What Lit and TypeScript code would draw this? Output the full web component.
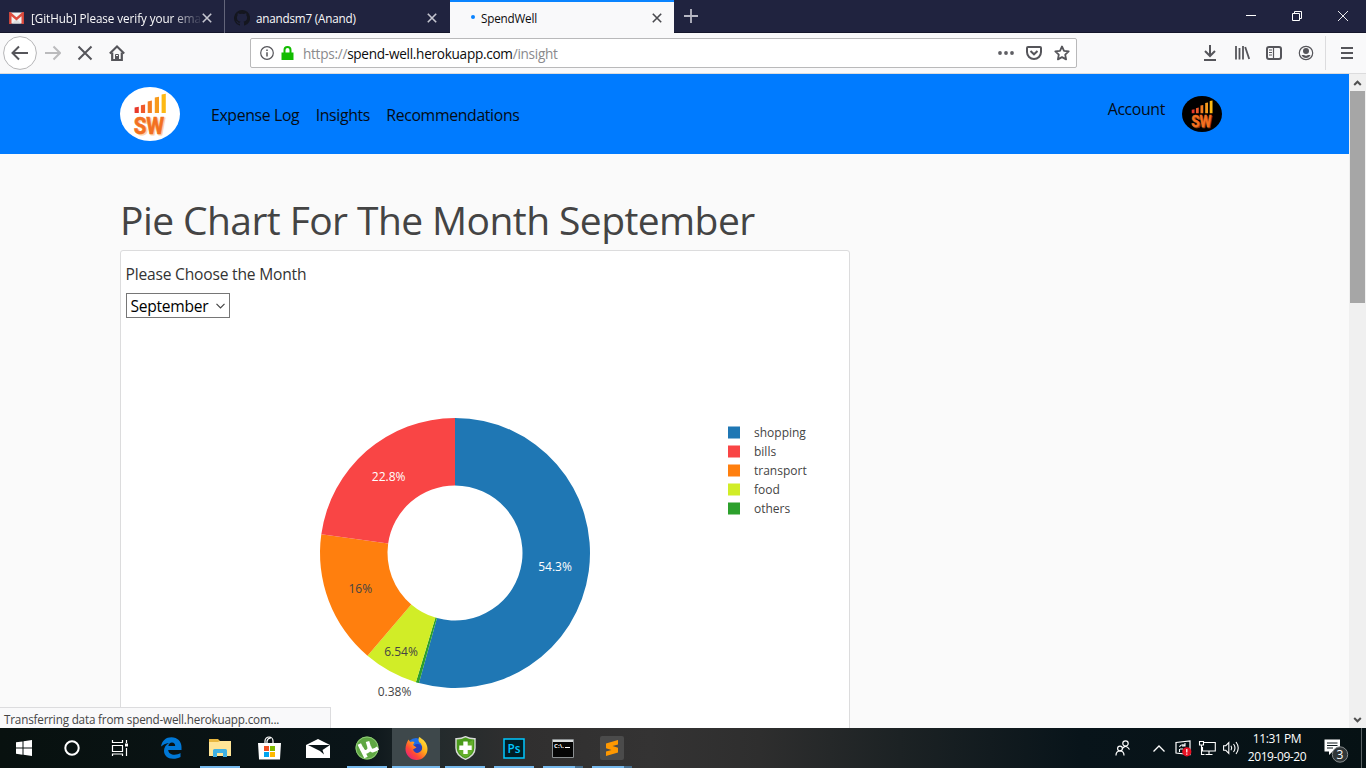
import { LitElement, html, svg, css } from "lit";
import { customElement, property } from "lit/decorators.js";

const slices = [
  { label: "shopping", value: 54.3, text: "54.3%", color: "#1f77b4", ink: "#fff", x: 555, y: 571 },
  { label: "others", value: 0.38, text: "0.38%", color: "#2ca02c", ink: "#444", x: 394.5, y: 696 },
  { label: "food", value: 6.54, text: "6.54%", color: "#d1ed27", ink: "#444", x: 401, y: 656 },
  { label: "transport", value: 16, text: "16%", color: "#ff7f0e", ink: "#444", x: 360.3, y: 593 },
  { label: "bills", value: 22.78, text: "22.8%", color: "#f94545", ink: "#fff", x: 388.7, y: 481 },
];
const legendOrder = ["shopping", "bills", "transport", "food", "others"];

@customElement("sw-logo")
class SwLogo extends LitElement {
  @property({ type: Boolean }) dark = false;
  static styles = css`
    :host { display: block; }
    svg { display: block; width: 100%; height: 100%; }
    text { font: bold 24px "Roboto", "Liberation Sans", sans-serif; }
  `;
  render() {
    const bars = [
      { x: 14.6, y: 20, c: "#e8392a" },
      { x: 20.9, y: 17.6, c: "#f0592a" },
      { x: 27.7, y: 13.8, c: "#f47d20" },
      { x: 34.8, y: 10, c: "#f79a1b" },
      { x: 41.6, y: 7, c: "#fdb913" },
    ];
    return html`<svg viewBox="0 0 60 54">
      <ellipse cx="30" cy="27" rx="30" ry="27" fill=${this.dark ? "#000" : "#fff"} />
      ${bars.map((b) => svg`<path d=${`M${b.x} ${b.y + 0.6}l4.2 -.8V${26}h-4.2z`} fill=${b.c} />`)}
      <text x="15.2" y="48.3" textLength="30" lengthAdjust="spacingAndGlyphs" fill=${this.dark ? "#8a3d10" : "#fbd7ad"} stroke=${this.dark ? "#8a3d10" : "#fbd7ad"}>SW</text>
      <text x="13.8" y="47" textLength="30" lengthAdjust="spacingAndGlyphs" fill="#f37021" stroke="#f37021" stroke-width=".6">SW</text>
    </svg>`;
  }
}

@customElement("browser-tabs")
class BrowserTabs extends LitElement {
  static styles = css`
    :host { display: flex; height: 33px; box-sizing: border-box; background: #20233f; border-bottom: 1px solid #14162b; }
    .tab { display: flex; align-items: center; width: 225px; height: 33px; box-sizing: border-box; color: #f9f9fa; padding: 2px 12px 0 9px; border-right: 1px solid #63657a; }
    .tab.second { border-right: 0; padding-right: 13px; }
    .tab.active { background: #f9f9fa; color: #0c0c0d; border-top: 2px solid #0a84ff; border-right: 0; width: 224px; padding: 0 12px 0 20px; }
    .name { flex: 1; margin-left: 6px; font-size: 11.7px; letter-spacing: -.2px; white-space: nowrap; line-height: 18px; }
    .fade { margin-left: 7px; -webkit-mask-image: linear-gradient(90deg, #000 140px, transparent 172px); mask-image: linear-gradient(90deg, #000 140px, transparent 172px); letter-spacing: -.07px; }
    .dot { width: 4px; height: 4px; border-radius: 2px; background: #0a84ff; margin-left: 1px; margin-top: -1px; }
    svg { display: block; flex: none; }
    .plus { margin: 9px 0 0 10px; }
    .controls { margin-left: auto; display: flex; }
    .controls svg { width: 46px; height: 32px; }
  `;
  cross(color: string) {
    return html`<svg width="10" height="10" viewBox="0 0 10 10"><path d="M.8.8l8.4 8.4M9.2.8L.8 9.2" stroke=${color} stroke-width="1.6" /></svg>`;
  }
  render() {
    return html`
      <div class="tab">
        <svg width="15" height="12" viewBox="0 0 15 12"><path d="M1 .5h13v11H1z" fill="#f2f2f2" /><path d="M3 11.5L7.5 7l4.5 4.5" fill="#ddd" /><path d="M1.3 12V1.5L7.5 7l6.2-5.5V12" fill="none" stroke="#dd4b3e" stroke-width="2.4" /></svg>
        <span class="name fade">[GitHub] Please verify your ema</span>${this.cross("#c5c6d0")}
      </div>
      <div class="tab second">
        <svg width="16" height="16" viewBox="0 0 16 16"><path fill="#14161f" d="M8 0a8 8 0 0 0-2.5 15.6c.4.1.5-.2.5-.4v-1.5c-2.2.5-2.700-.9-2.700-.9-.4-.9-.9-1.200-.9-1.200-.7-.5.1-.5.1-.5.8.1 1.200.8 1.200.8.7 1.300 1.900.9 2.300.7.1-.5.3-.9.5-1.100-1.800-.2-3.600-.9-3.600-4 0-.9.300-1.600.800-2.200-.1-.2-.4-1 .1-2.100 0 0 .7-.2 2.200.8a7.600 7.600 0 0 1 4 0c1.500-1 2.200-.8 2.200-.8.400 1.100.2 1.900.1 2.100.5.600.8 1.300.8 2.200 0 3.100-1.900 3.800-3.700 4 .300.2.6.7.6 1.500v2.200c0 .2.1.5.6.4A8 8 0 0 0 8 0z" /></svg>
        <span class="name">anandsm7 (Anand)</span>${this.cross("#c5c6d0")}
      </div>
      <div class="tab active"><span class="dot"></span><span class="name">SpendWell</span>${this.cross("#4a4a4f")}</div>
      <svg class="plus" width="14" height="14" viewBox="0 0 14 14"><path d="M7 0v14M0 7h14" stroke="#b7b8c4" stroke-width="1.8" /></svg>
      <div class="controls">
        <svg viewBox="0 0 46 32"><path d="M18 15.500h10" stroke="#fff" /></svg>
        <svg viewBox="0 0 46 32"><path d="M18.500 13.500h7v7h-7zM20.500 13.500v-2h7v7h-2" fill="none" stroke="#fff" /></svg>
        <svg viewBox="0 0 46 32"><path d="M18 11l10 10M28 11L18 21" stroke="#fff" stroke-width=".9" /></svg>
      </div>`;
  }
}

@customElement("browser-toolbar")
class BrowserToolbar extends LitElement {
  static styles = css`
    :host { display: flex; align-items: center; height: 41px; box-sizing: border-box; background: #f9f9fa; border-bottom: 1px solid #dcdcdd; }
    svg { display: block; flex: none; fill: none; stroke: #55555a; stroke-width: 2; }
    .nav { display: flex; align-items: center; margin-left: 3px; width: 247px; }
    .forward { stroke: #bbbbbd; margin-left: 8px; }
    .stop { margin-left: 16px; }
    .home { margin-left: 16px; }
    .url { display: flex; align-items: center; width: 827px; height: 30px; box-sizing: border-box; border: 1px solid #b9b9ba; border-radius: 2px; background: #fff; padding: 0 6px 0 9px; }
    .lock { margin-left: 7px; }
    .address { flex: 1; margin-left: 9px; font-size: 13.6px; letter-spacing: -.28px; color: #8a8a8d; line-height: 20px; padding-top: 2px; white-space: nowrap; }
    .address b { font-weight: 400; color: #0c0c0d; }
    .page-actions { display: flex; align-items: center; gap: 12px; }
    .tools { margin-left: auto; display: flex; align-items: center; gap: 16px; margin-right: 13px; }
    .sep { width: 1px; height: 34px; background: #dcdcde; margin: 0 -2px 0 -5px; }
  `;
  render() {
    return html`
      <div class="nav">
        <svg width="34" height="34" viewBox="0 0 34 34"><circle cx="17" cy="17" r="16.400" fill="#fff" stroke="#b5b5b7" stroke-width="1" /><path d="M10 17h15M16 10.500L9.500 17l6.500 6.500" /></svg>
        <svg class="forward" width="16" height="16" viewBox="0 0 16 16"><path d="M0 8h15M8.500 1.500L15 8l-6.500 6.500" /></svg>
        <svg class="stop" width="16" height="16" viewBox="0 0 16 16"><path d="M1.500 1.500l13 13M14.500 1.500l-13 13" /></svg>
        <svg class="home" width="16" height="16" viewBox="0 0 16 16"><path d="M.8 8.500L8 1.500l7.200 7" /><path d="M3.200 7.500V15h9.600V7.500M8 15v-4" stroke-width="2.200" /><path d="M6.500 9.500h3V15h-3z" stroke-width="1" /></svg>
      </div>
      <div class="url">
        <svg width="14" height="14" viewBox="0 0 14 14"><circle cx="7" cy="7" r="6.300" stroke-width="1.200" /><path d="M7 6.300v4.200M7 3.500v1.500" stroke-width="1.500" /></svg>
        <svg class="lock" width="13" height="14" viewBox="0 0 13 14"><path d="M.5 6.500h12v7.500H.5z" fill="#12bc00" stroke="none" /><path d="M3.500 7V4a3 3 0 0 1 6 0v3" stroke="#12bc00" /></svg>
        <span class="address">https://<b>spend-well.herokuapp.com</b>/insight</span>
        <div class="page-actions">
          <svg width="16" height="4" viewBox="0 0 16 4"><g fill="#5f5f64" stroke="none"><circle cx="2" cy="2" r="1.900" /><circle cx="8" cy="2" r="1.900" /><circle cx="14" cy="2" r="1.900" /></g></svg>
          <svg width="16" height="14" viewBox="0 0 16 14"><path d="M2 1h12a1 1 0 0 1 1 1v4a7 7 0 0 1-14 0V2a1 1 0 0 1 1-1z" /><path d="M4.500 5L8 8.300 11.500 5" /></svg>
          <svg width="16" height="16" viewBox="0 0 16 16"><path d="M8 1.500l2 4.300 4.700.6-3.500 3.200.9 4.800L8 12.100l-4.100 2.300.9-4.800L1.300 6.400l4.700-.6z" stroke-width="1.800" stroke-linejoin="round" /></svg>
        </div>
      </div>
      <div class="tools">
        <svg width="16" height="16" viewBox="0 0 16 16"><path d="M8 0v11M3 6l5 5 5-5M2 15h12" /></svg>
        <svg width="16" height="16" viewBox="0 0 16 16"><path d="M2 1v13.500M5.500 3v11.500M9 1v13.500M11.200 2l4 12" stroke-width="1.800" /></svg>
        <svg width="16" height="14" viewBox="0 0 16 14"><rect x="1" y="1" width="14" height="12" rx="2" /><path d="M7.500 1v12" stroke-width="1.200" /><path d="M3 4h3M3 6.500h3M3 9h3" stroke-width="1" /></svg>
        <svg width="16" height="16" viewBox="0 0 16 16"><circle cx="8" cy="8" r="6.700" stroke-width="1.200" /><circle cx="8" cy="6" r="3" fill="#55555a" stroke="none" /><path d="M3.500 10h2.500q2 1.300 4 0h2.500q-1.300 3-4.500 3t-4.500-3z" fill="#55555a" stroke="none" /></svg>
        <span class="sep"></span>
        <svg width="13" height="14" viewBox="0 0 13 14"><path d="M1 2h12M1 7h12M1 12h12" /></svg>
      </div>`;
  }
}

@customElement("spend-page")
class SpendPage extends LitElement {
  static styles = css`
    :host { display: flex; flex-direction: column; flex: 1; min-width: 0; overflow: hidden; background: #fafafa; }
    .navbar { flex: none; display: flex; align-items: center; height: 80px; background: #007bff; padding: 0 127px 0 120px; color: #050b14; font-size: 15.800px; letter-spacing: -.34px; }
    .brand { width: 60px; height: 54px; margin-top: -1px; }
    .links { display: flex; gap: 16.300px; margin-left: 31px; padding-top: 2px; }
    .links span, .account { white-space: nowrap; line-height: 24px; }
    .account { margin: -10px 17px 0 auto; }
    .avatar { width: 40px; height: 36px; margin-top: 0; }
    .main { flex: none; margin-left: 120px; width: 730px; }
    h1 { margin: 42px 0 6px; font-size: 39px; letter-spacing: -.58px; line-height: 48px; font-weight: 400; color: #444; white-space: nowrap; }
    .card { height: 520px; box-sizing: border-box; border: 1px solid #dcdcdd; border-radius: 3px; background: #fff; padding: 11px 0 0; }
    .label { margin-left: 4.500px; font-size: 15.600px; letter-spacing: -.2px; line-height: 24px; color: #333; }
    .select { margin: 7px 0 0 5px; width: 104px; height: 25px; box-sizing: border-box; border: 1px solid #767676; display: flex; align-items: center; justify-content: space-between; padding: 0 4px 0 3.500px; font-size: 15.600px; letter-spacing: -.28px; color: #000; }
    .chart { display: block; }
    .chart text { font: 12px "Open Sans", sans-serif; }
  `;
  arc(start: number, end: number) {
    const pt = (r: number, f: number) => {
      const a = f * 2 * Math.PI;
      return `${455 + r * Math.sin(a)} ${553 - r * Math.cos(a)}`;
    };
    const big = end - start > 0.5 ? 1 : 0;
    return `M${pt(135, start)}A135 135 0 ${big} 1 ${pt(135, end)}L${pt(67.5, end)}A67.500 67.500 0 ${big} 0 ${pt(67.5, start)}Z`;
  }
  render() {
    let at = 0;
    const rings = slices.map((s) => {
      const start = at;
      at += s.value / 100;
      return svg`<path d=${this.arc(start, at)} fill=${s.color} />`;
    });
    return html`
      <div class="navbar">
        <sw-logo class="brand"></sw-logo>
        <div class="links">
          <span>Expense Log</span><span>Insights</span><span>Recommendations</span>
        </div>
        <span class="account">Account</span>
        <sw-logo class="avatar" dark></sw-logo>
      </div>
      <div class="main">
        <h1>Pie Chart For The Month September</h1>
        <div class="card">
          <div class="label">Please Choose the Month</div>
          <div class="select"><span>September</span><svg width="9" height="6" viewBox="0 0 9 6"><path d="M.5.8l4 4 4-4" fill="none" stroke="#444" stroke-width="1.200" /></svg></div>
          <svg class="chart" width="728" height="410" viewBox="121 318 728 410">
            ${rings}
            ${slices.map((s) => svg`<text x=${s.x} y=${s.y} fill=${s.ink} text-anchor="middle">${s.text}</text>`)}
            ${legendOrder.map((name, i) => {
              const s = slices.find((v) => v.label === name)!;
              return svg`<rect x="728" y=${426.5 + i * 19} width="12" height="12" fill=${s.color} /><text x="754" y=${437.3 + i * 19} fill="#444">${name}</text>`;
            })}
          </svg>
        </div>
      </div>`;
  }
}

@customElement("task-bar")
class TaskBar extends LitElement {
  static styles = css`
    :host { display: flex; height: 40px; color: #fff; background: linear-gradient(90deg, #08110f 0, #0a1418 360px, #222a2c 430px, #302f2f 520px, #343333 650px, #2e2e2e 760px, #1c2224 900px, #08141a 1080px, #061114 1366px); }
    svg { display: block; flex: none; overflow: visible; }
    .item { position: relative; width: 48px; height: 40px; display: flex; align-items: center; justify-content: center; }
    .apps { display: flex; gap: 1px; margin-left: 3px; }
    .focus { background: #3e484b; }
    .open::after { content: ""; position: absolute; left: 4px; right: 4px; bottom: 0; height: 2px; background: #76b9ed; }
    .focus::after { left: 0; right: 0; }
    .multi::after { background: linear-gradient(90deg, #76b9ed 32px, #476f8f 32px); }
    .tray { display: flex; margin-left: auto; align-items: center; }
    .people { margin-right: 24px; }
    .update { margin: 0 7px 0 10px; }
    .volume { margin-left: 7px; }
    .clock { width: 74px; text-align: center; font-size: 12px; line-height: 18px; letter-spacing: -.42px; margin: -1px 0 0 0; white-space: nowrap; }
    .notice { margin: 6px 0 0 10px; }
    .edge { width: 1px; height: 40px; background: #5a6264; margin: 0 4px 0 13px; }
    text { font-family: "Open Sans", sans-serif; }
  `;
  render() {
    return html`
      <div class="item"><svg width="16" height="16" viewBox="0 0 16 16"><path d="M0 2.300L6.500 1.400v6.100H0zM7.500 1.200L16 0v7.500H7.500zM0 8.500h6.500v6.200L0 13.800zM7.500 8.500H16V16l-8.500-1.200z" fill="#fff" /></svg></div>
      <div class="item"><svg width="16" height="16" viewBox="0 0 16 16"><circle cx="8" cy="8" r="6.700" fill="none" stroke="#fff" stroke-width="2" /></svg></div>
      <div class="item"><svg width="16" height="16" viewBox="0 0 16 16"><path d="M.5 0v2.500h10V0M.5 5.500h10v6H.5zM.5 16v-2h10v2M14.500 0v3M14.500 8v8" fill="none" stroke="#fff" stroke-width="1.200" /><path d="M13 3.500h3v3h-3z" fill="#fff" /></svg></div>
      <div class="apps">
        <div class="item"><svg width="21" height="22" viewBox="0 0 21 22"><path d="M0 9.500C1 3.500 5 .2 10.500.2c6 0 10 4.300 10 9.800v3H7.200c.2 3.200 3 4.800 6.300 4.800 2.300 0 4.300-.6 6-1.700V20c-2 1.200-4.500 1.800-7.500 1.800-5.500 0-9-3.300-9-8 0-3.500 1.800-6.200 5-7.900C4.500 6.300 1.800 7.800 0 9.500zM7.400 9h6.800c0-2.300-1.200-3.600-3.200-3.600S7.700 6.800 7.400 9z" fill="#0078d7" /></svg></div>
        <div class="item open"><svg width="22" height="18" viewBox="0 0 22 18"><path d="M0 0h9l2 2h11v15H0z" fill="#e8b73f" /><path d="M0 3h9l2-1h11v15H0z" fill="#ffe596" /><path d="M4 18v-6.500q0-1.500 1.500-1.500h11q1.500 0 1.500 1.500V18h-4v-4H8v4z" fill="#3fb1e3" /></svg></div>
        <div class="item"><svg width="22" height="23" viewBox="0 0 22 23"><path d="M7 6V4a4 4 0 0 1 8 0v2M9 6V4a4 4 0 0 1 4-3" fill="none" stroke="#fff" stroke-width="1.200" /><path d="M0 6h23l-1 16.500H1z" fill="#fff" /><path d="M6 9h5v5H6z" fill="#f25022" /><path d="M12 9h5v5h-5z" fill="#7fba00" /><path d="M6 15h5v5H6z" fill="#00a4ef" /><path d="M12 15h5v5h-5z" fill="#ffb900" /></svg></div>
        <div class="item"><svg width="24" height="19" viewBox="0 0 24 19"><path d="M0 6L12 0l12 6v13H0z" fill="#fff" /><path d="M2 6h22l-7.500 5 1.500 4.500-4-3.500z" fill="#0a1418" /></svg></div>
        <div class="item open"><svg width="24" height="24" viewBox="0 0 24 24"><circle cx="12" cy="12" r="11.500" fill="#5fa743" /><circle cx="12" cy="12" r="11" fill="none" stroke="#8fc979" /><path d="M4.300 8L11 21.500" fill="none" stroke="#fff" stroke-width="3.800" /><path d="M6.500 12q2 5 5.500 3.500 3.300-1.300 2-5L12.500 5.500M14.300 10.500q1.500 4.700 3.700 4 2.400-.7 5-2.500" fill="none" stroke="#fff" stroke-width="3.600" /></svg></div>
        <div class="item open focus"><svg width="23" height="23" viewBox="0 0 23 23"><defs><linearGradient id="ff" x1="1" y1="0" x2="0.100" y2="1"><stop offset="0" stop-color="#fff44f" /><stop offset=".4" stop-color="#ffb017" /><stop offset=".7" stop-color="#ff4a35" /><stop offset="1" stop-color="#e1158e" /></linearGradient></defs><circle cx="11" cy="10" r="9" fill="#1f6fe8" /><circle cx="12.500" cy="12" r="5" fill="#2a3fb8" /><path d="M14 0c4 2 8.500 6 8.500 12A11 11 0 0 1 .5 12C.5 8 2 5 3.500 2.500l1.700 2.500q2.200-1 4.300 0L8 8l3.500 2.500-3.500 2q2 4.500 6 3 4-2 3-6.500-1-3-3-4-1-2 0-5z" fill="url(#ff)" /></svg></div>
        <div class="item open"><svg width="21" height="24" viewBox="0 0 21 24"><path d="M10.500.7Q15 3 20 2.800V12q0 7.500-9.500 11.300Q1 19.500 1 12V2.800Q6 3 10.500.7z" fill="#4a9a1c" stroke="#d8dad8" stroke-width="1.400" /><path d="M3 13l15-9v8q0 6-7.500 9.500Q4 19 3 13z" fill="#86c83e" opacity=".45" /><path d="M8.300 5.500h4.400v4h4v4.400h-4v4H8.300v-4h-4V9.500h4z" fill="#fff" /></svg></div>
        <div class="item open"><svg width="22" height="21" viewBox="0 0 22 21"><path d="M1 1h20v19H1z" fill="#001d26" stroke="#00c8ff" stroke-width="1.500" /><text x="4.500" y="15" font-size="12" font-weight="600" fill="#00c8ff" textLength="13" lengthAdjust="spacingAndGlyphs">Ps</text></svg></div>
        <div class="item open multi"><svg width="22" height="19" viewBox="0 0 22 19"><path d="M.5.5h21v18H.5z" fill="#050505" stroke="#8b8f91" /><path d="M1 1h20v2H1z" fill="#d9dcdd" /><text x="2" y="9" font-size="6" font-weight="700" fill="#fff" textLength="10">C:\\.</text><path d="M13 8.500h5" stroke="#fff" /></svg></div>
        <div class="item open multi"><svg width="24" height="24" viewBox="0 0 24 24"><rect width="24" height="24" rx="2" fill="#4b4b4b" /><path d="M6 7.500L18 4v4.500L12.500 10 18 11.800v4.700L6 20v-4.500l5.500-1.500L6 12.300z" fill="#ff9800" /></svg></div>
      </div>
      <div class="tray">
        <svg class="people" width="14" height="16" viewBox="0 0 14 16" fill="none" stroke="#fff" stroke-width="1.200"><circle cx="10.500" cy="3.500" r="2.700" /><path d="M7.500 8.500q3.500-4.500 7 1" /><circle cx="5" cy="8.500" r="2.400" /><path d="M1 15.500q0-4.500 4-4.500t4 4.500" /></svg>
        <svg width="12" height="7" viewBox="0 0 12 7"><path d="M.5 6.500L6 1l5.500 5.500" fill="none" stroke="#fff" stroke-width="1.300" /></svg>
        <svg class="update" width="17" height="16" viewBox="0 0 17 16"><path d="M1 2.500L15 1v13.500L1 13z" fill="none" stroke="#fff" stroke-width="1.200" /><path d="M4.500 7q1-3 5-2M10 3v3H7M4.500 9v3M5 9h3" fill="none" stroke="#fff" stroke-width="1.100" /><circle cx="11.800" cy="11.800" r="4.600" fill="#e81123" /><path d="M11.800 9v3.500M11.800 13.500v1.200" stroke="#fff" stroke-width="1.200" /></svg>
        <svg width="17" height="14" viewBox="0 0 17 14"><path d="M5 1.500h11.300v8.500H3.500V6M10 10v3.500M6.500 13.500h7M.5.500h4V4h-4zM2.500 4v9.500h3" fill="none" stroke="#fff" stroke-width="1.100" /></svg>
        <svg class="volume" width="17" height="14" viewBox="0 0 17 14"><path d="M.6 4.700h2.200l3-3v10.600l-3-3H.6zM8 4.700q1.500 2.300 0 4.600M10.500 3q3 4 0 8M13 1q4.500 6 0 12" fill="none" stroke="#fff" stroke-width="1.100" /></svg>
        <div class="clock">11:31 PM<br />2019-09-20</div>
        <svg class="notice" width="24" height="24" viewBox="0 0 24 24"><path d="M.5 .5h15.500v12H8.500L5 16V12.500H.5z" fill="#fff" /><path d="M3 4h10.500M3 6.500h10.500M3 9h6" stroke="#101b1f" stroke-width="1" /><circle cx="16" cy="15.500" r="7.700" fill="#303638" stroke="#858a8c" /><text x="16" y="19.800" fill="#fff" font-size="12" text-anchor="middle">3</text></svg>
        <span class="edge"></span>
      </div>`;
  }
}

@customElement("app-root")
class AppRoot extends LitElement {
  static styles = css`
    :host { display: flex; flex-direction: column; width: 1366px; height: 768px; overflow: hidden; position: relative; font-family: "Open Sans", "Noto Sans", sans-serif; }
    browser-tabs, browser-toolbar, task-bar { flex: none; }
    .view { flex: 1; min-height: 0; display: flex; position: relative; }
    .scroll { width: 17px; box-sizing: border-box; background: #f0f0f0; display: flex; flex-direction: column; align-items: center; }
    .scroll svg { display: block; flex: none; height: 17px; }
    .thumb { width: 15px; height: 212px; background: #a6a6a6; }
    .rest { flex: 1; }
    .status { position: absolute; left: 0; bottom: 0; width: 331px; height: 21px; box-sizing: border-box; background: #f9f9fa; border: 1px solid #dcdcde; border-width: 1px 1px 0 0; padding: 1px 0 0 4px; font-size: 11.700px; letter-spacing: -.18px; line-height: 20px; color: #444; white-space: nowrap; }
  `;
  render() {
    return html`
      <browser-tabs></browser-tabs>
      <browser-toolbar></browser-toolbar>
      <div class="view">
        <spend-page></spend-page>
        <div class="scroll">
          <svg width="9" viewBox="0 0 9 17"><path d="M1.200 11L4.500 7.700 7.800 11" fill="none" stroke="#505050" stroke-width="2" /></svg>
          <div class="thumb"></div>
          <div class="rest"></div>
          <svg width="9" viewBox="0 0 9 17"><path d="M1.200 7L4.500 10.300 7.800 7" fill="none" stroke="#505050" stroke-width="2" /></svg>
        </div>
        <div class="status">Transferring data from spend-well.herokuapp.com...</div>
      </div>
      <task-bar></task-bar>`;
  }
}
